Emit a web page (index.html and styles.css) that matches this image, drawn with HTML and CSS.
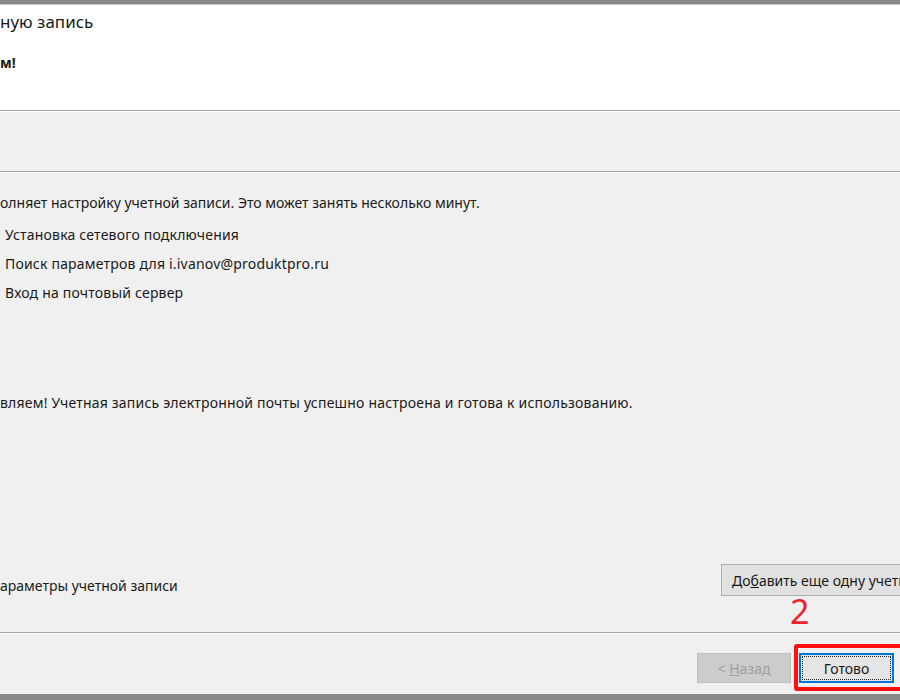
FILE: index.html
```html
<!DOCTYPE html>
<html lang="ru">
<head>
    <meta charset="UTF-8">
    <title>Добавить учетную запись</title>
    <link rel="stylesheet" href="styles.css">
</head>
<body>
    <div class="window">
        <div class="topbar"></div>

        <div class="header">
            <div class="title">ную запись</div>
            <div class="subtitle">м!</div>
        </div>

        <div class="band"></div>

        <div class="main">
            <p class="intro">олняет настройку учетной записи. Это может занять несколько минут.</p>
            <ul class="steps">
                <li>Установка сетевого подключения</li>
                <li>Поиск параметров для i.ivanov@produktpro.ru</li>
                <li>Вход на почтовый сервер</li>
            </ul>
            <p class="done">вляем! Учетная запись электронной почты успешно настроена и готова к использованию.</p>

            <div class="extra">
                <span>араметры учетной записи</span>
                <button class="btn btn-add">До<u>б</u>авить еще одну учетную запись</button>
            </div>
        </div>

        <div class="footer">
            <button class="btn btn-back" disabled>&lt; <u>Н</u>азад</button>
            <button class="btn btn-finish">Готово</button>
        </div>

        <div class="bottombar"></div>

        <!-- пометки поверх скриншота -->
        <div class="mark-num">2</div>
        <div class="mark-box"></div>
    </div>
</body>
</html>
```

FILE: styles.css
```css
* {
    box-sizing: border-box;
}

body {
    margin: 0;
    font-family: "Noto Sans", Arial, sans-serif;
    color: #1a1a1a;
    overflow: hidden;
}

.window {
    position: relative;
    width: 900px;
    height: 700px;
    display: flex;
    flex-direction: column;
    background-color: #f0f0f0;
    overflow: hidden;
}

.topbar {
    height: 5px;
    background-color: #898989;
    border-bottom: 1px solid #c9c9c9;
}

.header {
    height: 106px;
    background-color: white;
    border-bottom: 1px solid #a0a0a0;
    box-shadow: 0 1px 0 #ffffff;
    padding-top: 4px;
}

.title {
    font-size: 17px;
    line-height: 26px;
}

.subtitle {
    margin-top: 18px;
    font-size: 14px;
    font-weight: bold;
    line-height: 20px;
}

.band {
    height: 61px;
    border-bottom: 1px solid #a0a0a0;
    box-shadow: 0 1px 0 #ffffff;
}

.main {
    flex: 1;
    display: flex;
    flex-direction: column;
    padding-top: 21px;
    padding-bottom: 36px;
    font-size: 14px;
    border-bottom: 1px solid #a0a0a0;
    box-shadow: 0 1px 0 #ffffff;
}

.intro {
    margin: 0;
    line-height: 20px;
}

.steps {
    list-style: none;
    margin: 7px 0 0 0;
    padding: 0 0 0 5px;
    letter-spacing: 0.2px;
}

.steps li {
    line-height: 29px;
}

.done {
    margin: 86px 0 0 0;
    line-height: 20px;
    letter-spacing: 0.2px;
}

.extra {
    margin-top: auto;
    display: flex;
    justify-content: space-between;
    align-items: flex-end;
    line-height: 20px;
}

.btn {
    font-family: "Noto Sans", Arial, sans-serif;
    font-size: 14px;
    color: #1a1a1a;
    background-color: #e1e1e1;
    border: 1px solid #adadad;
    padding: 0;
    height: 32px;
    white-space: nowrap;
}

.btn-add {
    width: 260px;
    margin-right: -81px;
    padding-left: 10px;
    text-align: left;
}

.footer {
    height: 61px;
    display: flex;
    justify-content: flex-end;
    align-items: flex-start;
    gap: 8px;
    padding-top: 20px;
    padding-right: 6px;
}

.btn-back {
    width: 94px;
    height: 30px;
    background-color: #cccccc;
    border-color: #bfbfbf;
    color: #a0a0a0;
}

.btn-finish {
    width: 95px;
    height: 30px;
    background-color: #e5e5e5;
    border: 2px solid #0078d7;
    outline: 1px dotted #222;
    outline-offset: -4px;
}

.bottombar {
    height: 6px;
    background-color: #898989;
}

.mark-num {
    position: absolute;
    left: 790px;
    top: 591px;
    font-family: "Noto Sans", Arial, sans-serif;
    font-size: 34px;
    line-height: 40px;
    color: #f2202a;
}

.mark-box {
    position: absolute;
    left: 794px;
    top: 644px;
    width: 110px;
    height: 47px;
    border: 4px solid #ff1010;
    border-radius: 3px;
}
```
